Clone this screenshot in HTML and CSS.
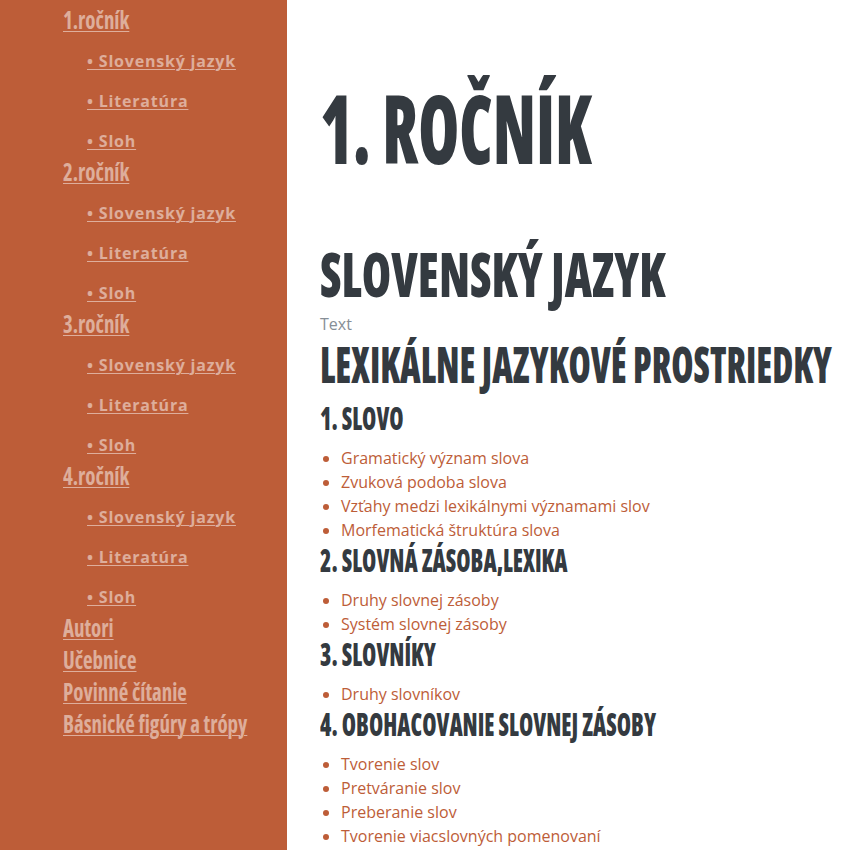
FILE: index.html
```html
<!DOCTYPE html>
<html lang="sk">
<head>
<meta charset="utf-8">
<title>1. ročník</title>
<link rel="stylesheet" href="styles.css">
</head>
<body>
<div class="page">
  <nav class="sidebar">
    <ul class="nav">
      <li class="year">
        <a class="cond" href="#">1.ročník</a>
        <ul class="sub">
          <li><a href="#">• Slovenský jazyk</a></li>
          <li><a href="#">• Literatúra</a></li>
          <li><a href="#">• Sloh</a></li>
        </ul>
      </li>
      <li class="year">
        <a class="cond" href="#">2.ročník</a>
        <ul class="sub">
          <li><a href="#">• Slovenský jazyk</a></li>
          <li><a href="#">• Literatúra</a></li>
          <li><a href="#">• Sloh</a></li>
        </ul>
      </li>
      <li class="year">
        <a class="cond" href="#">3.ročník</a>
        <ul class="sub">
          <li><a href="#">• Slovenský jazyk</a></li>
          <li><a href="#">• Literatúra</a></li>
          <li><a href="#">• Sloh</a></li>
        </ul>
      </li>
      <li class="year">
        <a class="cond" href="#">4.ročník</a>
        <ul class="sub">
          <li><a href="#">• Slovenský jazyk</a></li>
          <li><a href="#">• Literatúra</a></li>
          <li><a href="#">• Sloh</a></li>
        </ul>
      </li>
      <li class="year"><a class="cond" href="#">Autori</a></li>
      <li class="year"><a class="cond" href="#">Učebnice</a></li>
      <li class="year"><a class="cond" href="#">Povinné čítanie</a></li>
      <li class="year"><a class="cond" href="#">Básnické figúry a trópy</a></li>
    </ul>
  </nav>
  <main class="content">
    <h1 class="h h1">1. Ročník</h1>
    <h2 class="h h2">Slovenský jazyk</h2>
    <p class="muted">Text</p>
    <h3 class="h h3">Lexikálne jazykové prostriedky</h3>

    <h4 class="h h4">1. Slovo</h4>
    <ul class="topics">
      <li>Gramatický význam slova</li>
      <li>Zvuková podoba slova</li>
      <li>Vzťahy medzi lexikálnymi významami slov</li>
      <li>Morfematická štruktúra slova</li>
    </ul>

    <h4 class="h h4">2. Slovná zásoba,lexika</h4>
    <ul class="topics">
      <li>Druhy slovnej zásoby</li>
      <li>Systém slovnej zásoby</li>
    </ul>

    <h4 class="h h4">3. Slovníky</h4>
    <ul class="topics">
      <li>Druhy slovníkov</li>
    </ul>

    <h4 class="h h4">4. Obohacovanie slovnej zásoby</h4>
    <ul class="topics">
      <li>Tvorenie slov</li>
      <li>Pretváranie slov</li>
      <li>Preberanie slov</li>
      <li>Tvorenie viacslovných pomenovaní</li>
    </ul>
  </main>
</div>
</body>
</html>
```
FILE: styles.css
```css
html, body {
  margin: 0;
  padding: 0;
  background: #ffffff;
}

body {
  font-family: "Open Sans", "Lato", sans-serif;
  font-size: 16px;
  line-height: 24px;
  color: #6c757d;
  overflow: hidden;
}

.page {
  display: grid;
  grid-template-columns: 287px 1fr;
  min-height: 850px;
}

/* ---------- sidebar ---------- */
.sidebar {
  background: #bd5d38;
  padding: 4px 0 0 63px;
}

.nav,
.sub {
  list-style: none;
  margin: 0;
  padding: 0;
}

.nav a {
  color: rgba(255, 255, 255, 0.5);
  text-decoration: underline;
  text-decoration-thickness: 1px;
}

.cond {
  display: inline-block;
  font-family: "Open Sans", sans-serif;
  font-stretch: 75%;
  font-weight: 700;
  font-size: 24px;
  line-height: 32px;
  white-space: nowrap;
  text-underline-offset: 2px;
  transform: scaleX(0.87);
  transform-origin: 0 0;
}

.sub {
  padding-left: 24px;
}

.sub a {
  display: inline-block;
  font-weight: 700;
  font-size: 16px;
  letter-spacing: 0.8px;
  line-height: 24px;
  padding: 13px 0 3px;
  text-underline-offset: 2px;
}

/* ---------- content ---------- */
.content {
  padding: 80px 0 0 33px;
  overflow: hidden;
}

.h {
  font-family: "Open Sans", sans-serif;
  font-stretch: 75%;
  font-weight: 800;
  color: #343a40;
  text-transform: uppercase;
  white-space: nowrap;
  transform-origin: 0 0;
  margin: 0;
}

.h1 {
  font-size: 95px;
  line-height: 95px;
  margin-bottom: 67px;
  transform: scaleX(0.695);
}

.h2 {
  font-size: 62px;
  line-height: 62px;
  margin-bottom: 8px;
  transform: scaleX(0.765);
}

.muted {
  margin: 0;
  color: #868e96;
}

.h3 {
  font-size: 50px;
  line-height: 50px;
  margin: 3px 0 13px;
  transform: scaleX(0.718);
}

.h4 {
  font-size: 32px;
  line-height: 32px;
  margin: 2px 0 0;
  transform: scaleX(0.72);
}

.topics {
  margin: 12px 0 0;
  padding-left: 21px;
  color: #bd5d38;
}
```
